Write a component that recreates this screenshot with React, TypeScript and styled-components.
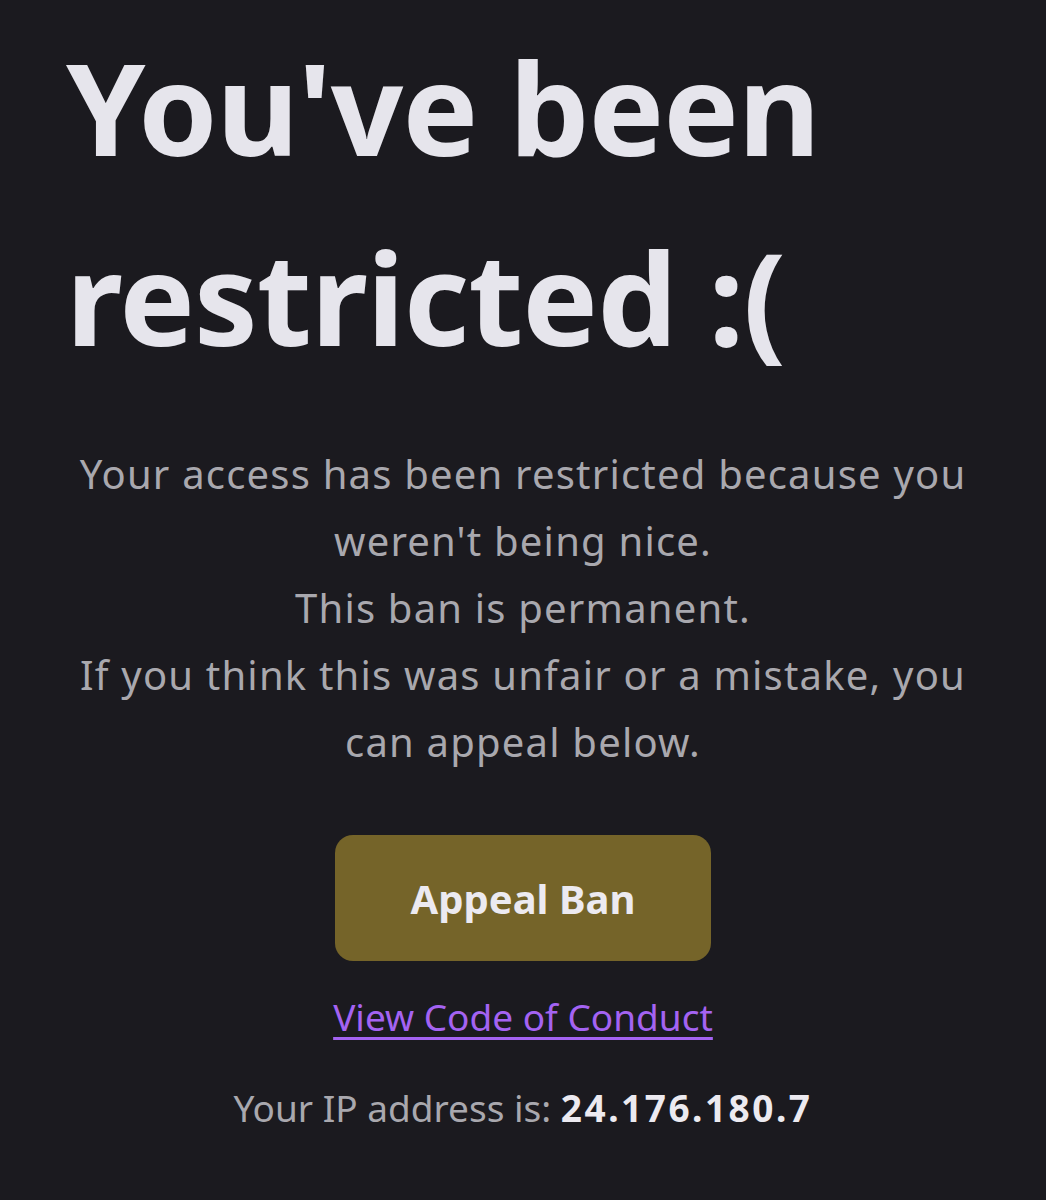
import * as React from 'react'
import styled, { createGlobalStyle } from 'styled-components'

const GlobalStyle = createGlobalStyle`
  html, body {
    margin: 0;
    padding: 0;
    background: #1b1a1f;
  }
  body {
    font-family: "Noto Sans", "DejaVu Sans", sans-serif;
  }
`

const Page = styled.main`
  min-height: 1200px;
  box-sizing: border-box;
  padding: 12px 66px 0;
  display: flex;
  flex-direction: column;
  align-items: center;
`

const Title = styled.h1`
  align-self: stretch;
  margin: 0;
  color: #e6e5ec;
  font-size: 127px;
  font-weight: 700;
  line-height: 190px;
  letter-spacing: -1px;
`

const Message = styled.p`
  margin: 48px 0 0;
  color: #a9a8ae;
  font-size: 40px;
  line-height: 67px;
  letter-spacing: 1.2px;
  text-align: center;
`

const AppealButton = styled.button`
  margin-top: 60px;
  width: 376px;
  height: 126px;
  border: none;
  border-radius: 18px;
  background: #756429;
  color: #eceaf0;
  font-family: inherit;
  font-size: 40px;
  font-weight: 700;
  cursor: pointer;
`

const ConductLink = styled.a`
  margin-top: 30px;
  color: #a463f2;
  font-size: 37px;
  text-decoration: underline;
  text-decoration-thickness: 3px;
  text-underline-offset: 6px;
`

const IpLine = styled.div`
  margin-top: 40px;
  color: #a9a8ae;
  font-size: 37px;
`

const Ip = styled.strong`
  color: #eceaf0;
  font-weight: 700;
  letter-spacing: 2.5px;
`

export default function App() {
  return (
    <>
      <GlobalStyle />
      <Page>
        <Title>
          You've been
          <br />
          restricted :(
        </Title>
        <Message>
          Your access has been restricted because you weren't being nice.
          <br />
          This ban is permanent.
          <br />
          If you think this was unfair or a mistake, you can appeal below.
        </Message>
        <AppealButton>Appeal Ban</AppealButton>
        <ConductLink href="#">View Code of Conduct</ConductLink>
        <IpLine>
          Your IP address is: <Ip>24.176.180.7</Ip>
        </IpLine>
      </Page>
    </>
  )
}
